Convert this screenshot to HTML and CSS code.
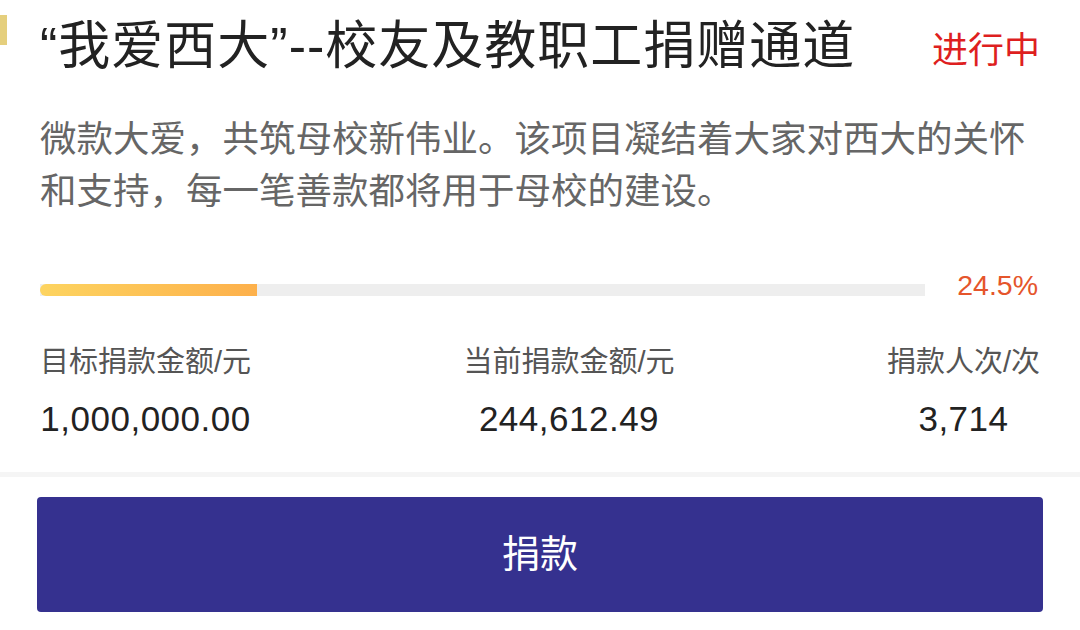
FILE: index.html
```html
<!DOCTYPE html>
<html lang="zh-CN">
<head>
<meta charset="utf-8">
<title>我爱西大</title>
<link rel="stylesheet" href="styles.css">
</head>
<body>
<div class="page">
  <header class="header">
    <h1 class="title">“我爱西大”--校友及教职工捐赠通道</h1>
    <span class="status">进行中</span>
  </header>
  <p class="desc">微款大爱，共筑母校新伟业。该项目凝结着大家对西大的关怀和支持，每一笔善款都将用于母校的建设。</p>
  <div class="progress-row">
    <div class="track"><div class="fill" style="width:24.5%"></div></div>
    <span class="percent">24.5%</span>
  </div>
  <div class="stats">
    <div class="stat">
      <div class="label">目标捐款金额/元</div>
      <div class="value">1,000,000.00</div>
    </div>
    <div class="stat">
      <div class="label">当前捐款金额/元</div>
      <div class="value">244,612.49</div>
    </div>
    <div class="stat">
      <div class="label">捐款人次/次</div>
      <div class="value">3,714</div>
    </div>
  </div>
  <div class="divider"></div>
  <div class="actions">
    <button class="donate">捐款</button>
  </div>
</div>
</body>
</html>
```

FILE: styles.css
```css
* { box-sizing: border-box; }
html, body { margin: 0; padding: 0; background: #fff; }
body {
  font-family: "Liberation Sans", "Noto Sans CJK SC", sans-serif;
  width: 1080px;
  height: 630px;
  overflow: hidden;
}
.page { position: relative; }
.header {
  position: relative;
  display: flex;
  align-items: center;
  justify-content: space-between;
  height: 92px;
  padding: 0 40px 0 40px;
}
.header::before {
  content: "";
  position: absolute;
  left: 0;
  top: 15px;
  width: 7px;
  height: 30px;
  background: #e5cf7d;
}
.title {
  margin: 0;
  font-size: 52px;
  font-weight: 400;
  color: #222;
  line-height: 60px;
  letter-spacing: 1px;
}
.status {
  font-size: 36px;
  color: #de1f1f;
  margin-top: 2px;
}
.desc {
  margin: 22px 40px 0 40px;
  font-size: 36.5px;
  line-height: 52px;
  color: #666;
}
.progress-row {
  display: flex;
  align-items: center;
  height: 40px;
  margin: 52px 42px 0 40px;
}
.track {
  flex: 1;
  height: 12px;
  background: #eeeeee;
  margin-right: 32px;
}
.fill {
  height: 100%;
  border-radius: 6px 0 0 6px;
  background: linear-gradient(90deg, #fdd460, #fdb04b);
}
.percent {
  font-size: 28.5px;
  color: #e5552b;
  padding-bottom: 10px;
}
.stats {
  display: flex;
  justify-content: space-between;
  padding: 32px 40px 30px 40px;
}
.stat { text-align: center; }
.label {
  font-size: 29px;
  line-height: 40px;
  color: #555;
}
.value {
  margin-top: 14px;
  font-size: 35px;
  line-height: 46px;
  letter-spacing: 0.5px;
  color: #222;
}
.divider {
  height: 5px;
  background: #f5f5f5;
}
.actions {
  padding: 20px 37px 0 37px;
}
.donate {
  display: block;
  width: 100%;
  height: 115px;
  border: 0;
  border-radius: 4px;
  background: #35318f;
  color: #fff;
  font-family: "Liberation Sans", "Noto Sans CJK SC", sans-serif;
  font-size: 38px;
  padding: 0 0 8px 0;
}
```
